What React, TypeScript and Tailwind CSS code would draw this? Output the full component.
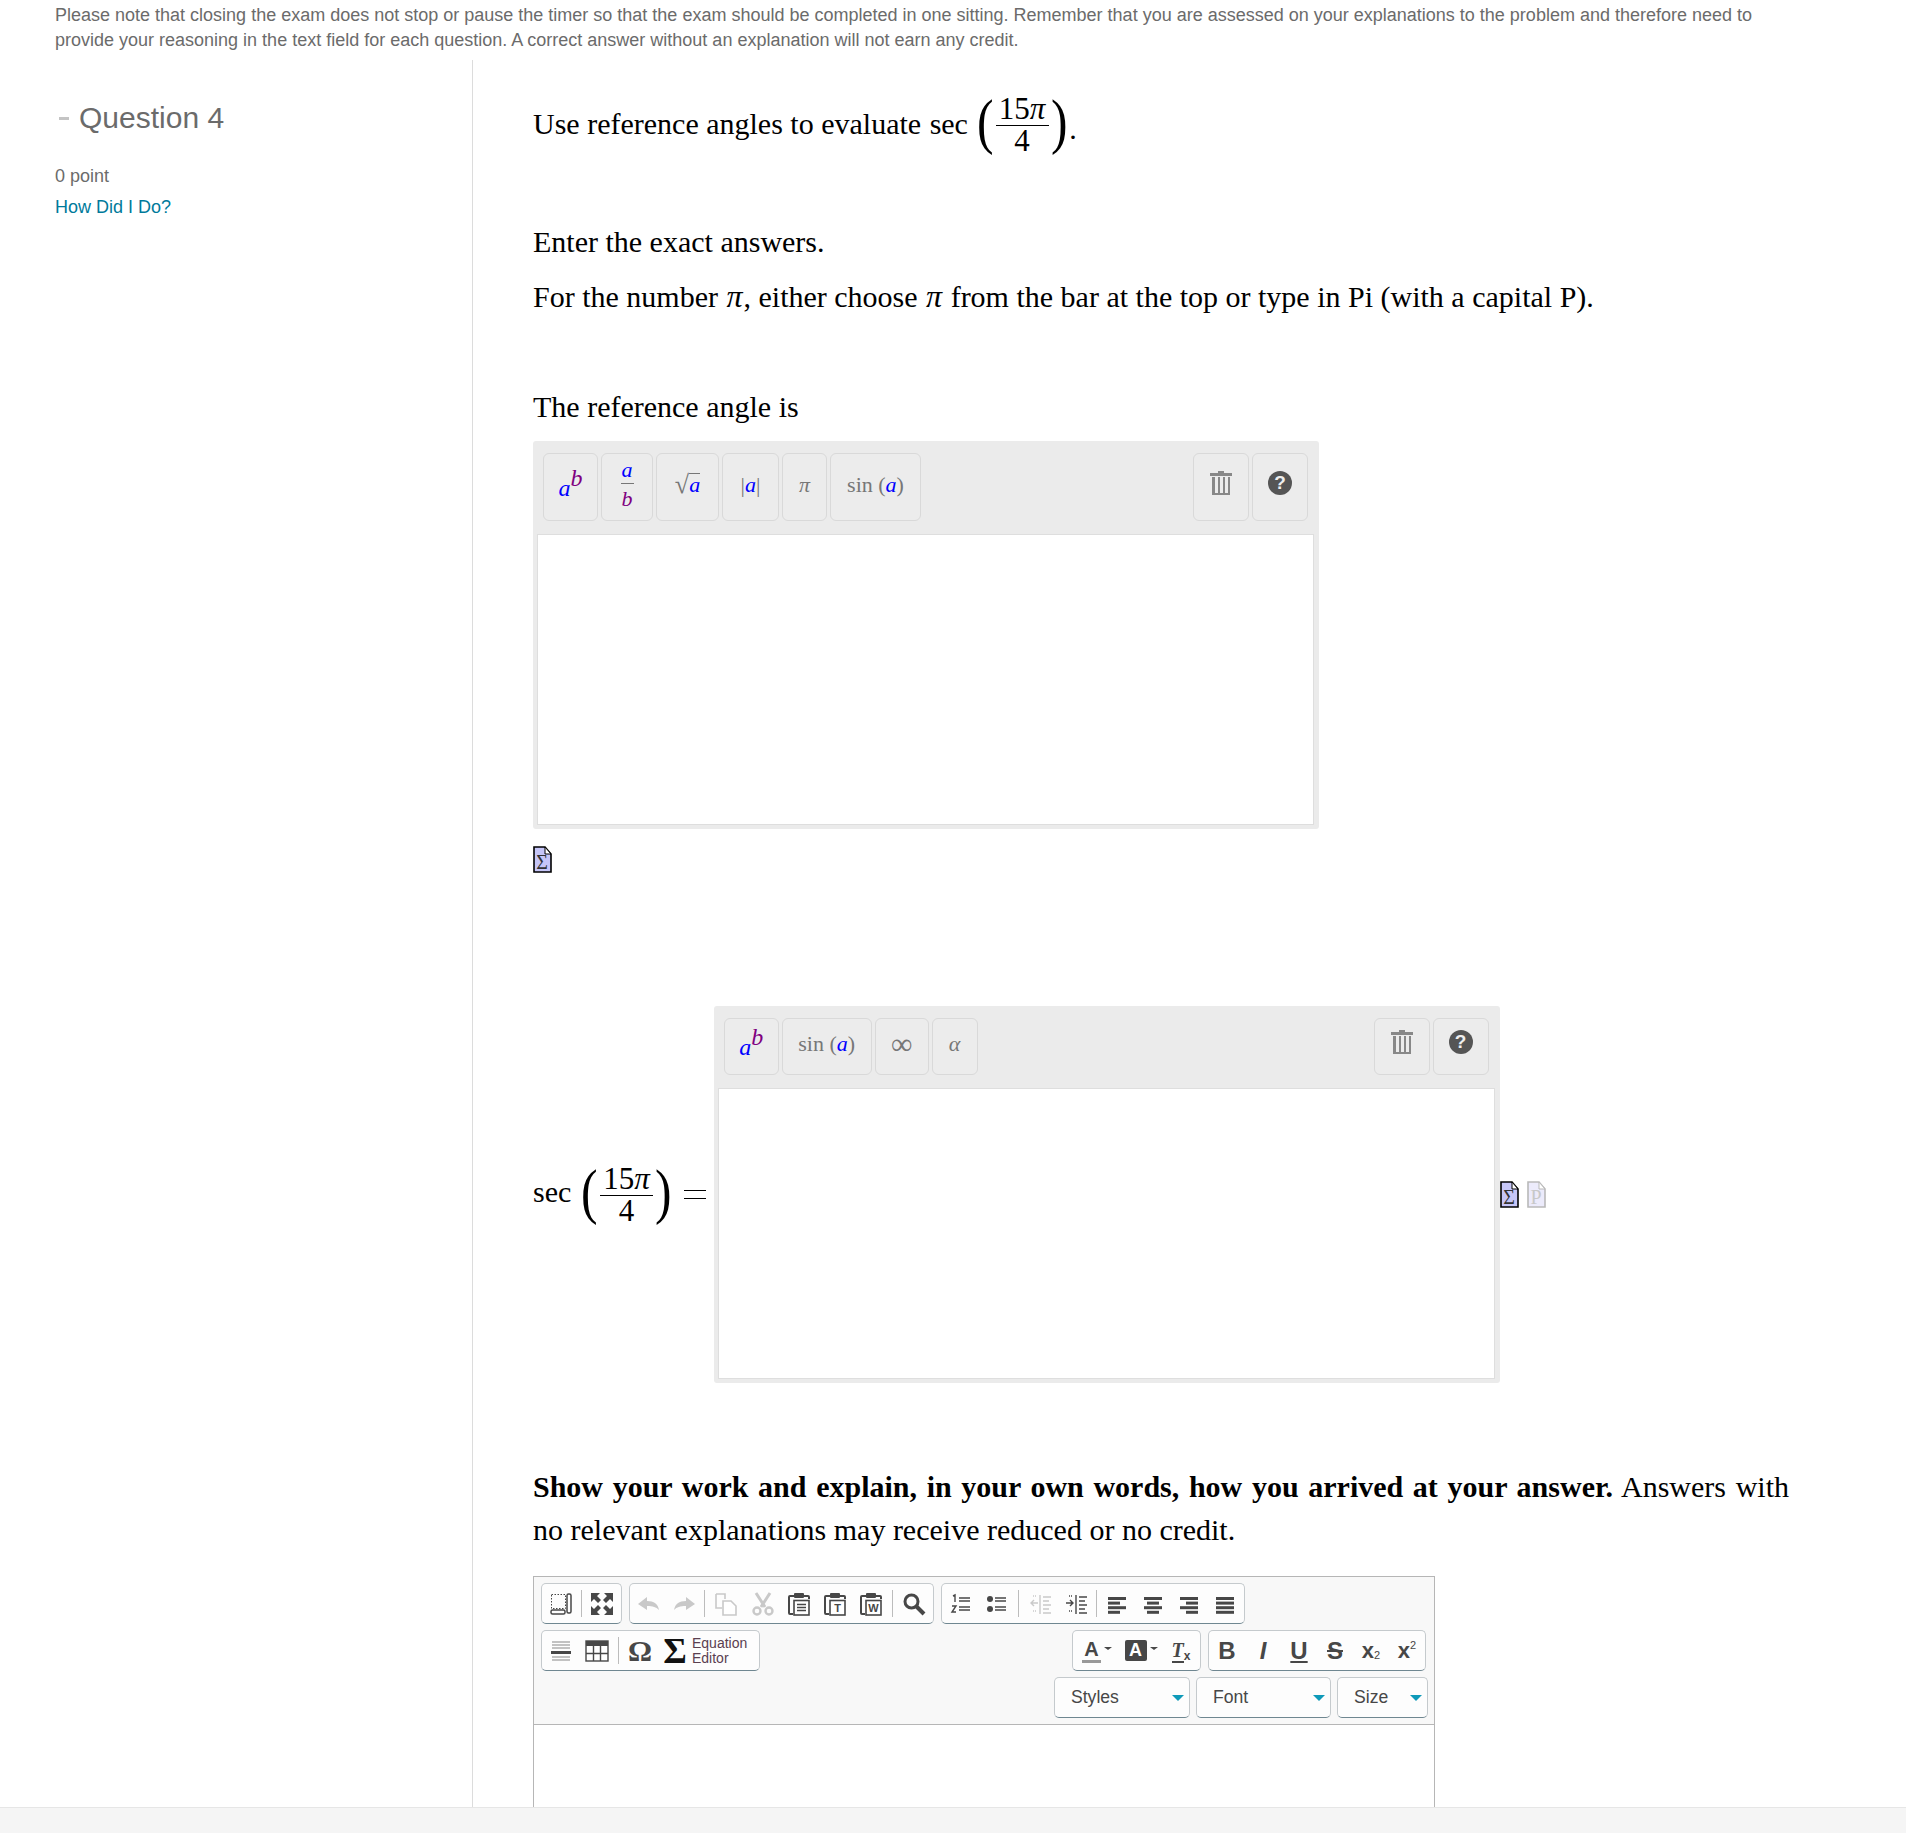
import type { ReactNode } from "react";

const A = () => <i className="text-[#0000ff]">a</i>;
const B = () => <i className="text-[#800080]">b</i>;

function Frac() {
  return (
    <span className="inline-flex flex-col items-center w-[53px] leading-[32px] text-[31px]">
      <span className="border-b-[1.5px] border-black w-full text-center h-[33px] whitespace-nowrap">
        15<i>π</i>
      </span>
      <span className="h-[29px] leading-[30px]">4</span>
    </span>
  );
}

function Paren({ children }: { children: ReactNode }) {
  return <span className="text-[62px] leading-[62px] font-light -mt-[6px] scale-x-[0.8]">{children}</span>;
}

function Pi() {
  return <i className="text-[32px] leading-[0] mx-[1px]">π</i>;
}

function MathBtn({ w, h, children }: { w: string; h: string; children: ReactNode }) {
  return (
    <div className={`${w} ${h} flex items-center justify-center pb-[5px] rounded-[6px] border border-[#d9d9d9] bg-[#ececec] text-[#777] text-[22px] font-['Liberation_Serif',serif]`}>
      {children}
    </div>
  );
}

function TrashIcon() {
  return (
    <svg width="22" height="25" viewBox="0 0 22 25" className="-mt-[2px]">
      <rect x="8" y="0" width="6" height="2" fill="#888" />
      <rect x="0" y="2" width="22" height="3" fill="#888" />
      <path d="M2 6h18v18H2z" fill="#888" />
      <rect x="5" y="6" width="3" height="16" fill="#ececec" />
      <rect x="10" y="6" width="3" height="16" fill="#ececec" />
      <rect x="15" y="6" width="3" height="16" fill="#ececec" />
    </svg>
  );
}

function HelpIcon() {
  return (
    <div className="w-[24px] h-[24px] -mt-[3px] rounded-full bg-[#555] text-[#eee] text-[19px] leading-[24px] font-bold text-center font-['Liberation_Sans',sans-serif]">
      ?
    </div>
  );
}

function DocIcon({ muted, glyph }: { muted?: boolean; glyph: string }) {
  const stroke = muted ? "#b9b9b9" : "#000";
  return (
    <svg width="19" height="27" viewBox="0 0 19 27">
      <path d="M1 1h11l6 7v18H1z" fill={muted ? "#ecebfb" : "#c6c6f8"} stroke={stroke} strokeWidth="1.6" />
      <path d="M12 1v7h6z" fill="#fff" stroke={stroke} strokeWidth="1" />
      <text x="9" y="23" textAnchor="middle" fontSize="20" fontFamily="Liberation Serif" fill={muted ? "#c8c8c8" : "#333"}>
        {glyph}
      </text>
    </svg>
  );
}

function MathPanel({ h, tools }: { h: string; tools: ReactNode }) {
  return (
    <div className="w-[786px] rounded-[3px] bg-[#ebebeb] pl-[4px] pr-[5px] pb-[4px]">
      <div className="flex justify-between pt-[12px] pl-[6px] pr-[6px] pb-[13px]">
        <div className="flex gap-[3px]">{tools}</div>
        <div className="flex gap-[3px]">
          <MathBtn w="w-[56px]" h={h}>
            <TrashIcon />
          </MathBtn>
          <MathBtn w="w-[56px]" h={h}>
            <HelpIcon />
          </MathBtn>
        </div>
      </div>
      <div className="h-[291px] bg-white border border-[#dedede]" />
    </div>
  );
}

function Sep({ mx = "mx-[3px]" }: { mx?: string }) {
  return <div className={`w-px h-[27px] bg-[#bcbcbc] ${mx}`} />;
}

function Group({ children, px = "px-px" }: { children: ReactNode; px?: string }) {
  return (
    <div className={`h-[41px] flex items-center rounded-[5px] border border-[#c5cacd] border-b-[#6f8791] bg-[#fdfdfd] text-[#474747] ${px}`}>
      {children}
    </div>
  );
}

function Btn({ children, cls = "w-[36px]" }: { children?: ReactNode; cls?: string }) {
  return <div className={`h-full flex items-center justify-center ${cls}`}>{children}</div>;
}

function Ico({ children, w = 24, h = 24 }: { children: ReactNode; w?: number; h?: number }) {
  return (
    <svg width={w} height={h} viewBox={`0 0 ${w} ${h}`} fill="none">
      {children}
    </svg>
  );
}

const ink = "#474747";
const faint = "#c9c9c9";

function Lines({ kind, color = ink }: { kind: "l" | "c" | "r" | "j"; color?: string }) {
  const row = [0, 1, 2, 3].map((i) => {
    const short = i % 2 === 1 && kind !== "j";
    const w = short ? 12 : 18;
    const x = kind === "l" || !short ? 3 : kind === "c" ? 6 : 9;
    return <rect key={i} x={x} y={5 + i * 4.6} width={w} height="3" fill={color} />;
  });
  return <Ico>{row}</Ico>;
}

function Clip({ letter, color = ink }: { letter?: string; color?: string }) {
  return (
    <Ico>
      <path d="M7 4H3q-1 0-1 1v16q0 1 1 1h3M17 4h4q1 0 1 1v2" stroke={color} strokeWidth="2" />
      <rect x="7" y="1" width="10" height="5" rx="1" fill={color} />
      <rect x="7" y="8.5" width="15" height="14.5" fill="#fff" stroke={color} strokeWidth="1.6" />
      {letter ? (
        <text x="14.5" y="20" textAnchor="middle" fontSize="11" fontWeight="700" fontFamily="Liberation Sans" fill={color}>
          {letter}
        </text>
      ) : (
        <path d="M10 12.5h9M10 15.5h9M10 18.5h9" stroke={color} strokeWidth="1.5" />
      )}
    </Ico>
  );
}

function Indent({ color, flip }: { color: string; flip?: boolean }) {
  return (
    <Ico>
      <path d="M12 3v19" stroke={color} strokeWidth="1.4" />
      <path d="M15 5h8M15 9h6M15 13h8M15 17h6M15 21h8" stroke={color} strokeWidth="1.4" />
      <path d="M5 4h4M5 19h4" stroke={color} strokeWidth="1.4" strokeDasharray="1 1" />
      {flip ? <path d="M10 11H3M6 8l-3 3 3 3" stroke={color} strokeWidth="1.4" /> : <path d="M2 11h7M6 8l3 3-3 3" stroke={color} strokeWidth="1.4" />}
    </Ico>
  );
}

const Caret = () => <div className="w-0 h-0 border-x-[4px] border-x-transparent border-t-[3px] border-t-[#474747] ml-[3px] -mt-[5px]" />;

function Select({ w, label }: { w: string; label: string }) {
  return (
    <div className={`${w} h-[41px] flex items-center justify-between pl-[16px] pr-[5px] rounded-[5px] border border-[#c5cacd] border-b-[#6f8791] bg-[#fdfdfd] text-[17.6px] text-[#474747]`}>
      <span>{label}</span>
      <div className="w-0 h-0 border-x-[6px] border-x-transparent border-t-[6px] border-t-[#0e9ab9]" />
    </div>
  );
}

function RichEditor() {
  return (
    <div className="w-[902px] h-[400px] border border-[#b6b6b6] font-['Liberation_Sans',sans-serif]">
      <div className="bg-[#f8f8f8] border-b border-[#b6b6b6] px-[7px] pt-[6px] pb-[6px] flex flex-col gap-[6px]">
        <div className="flex gap-[7px]">
          <Group>
            <Btn>
              <Ico>
                <rect x="2.5" y="2.5" width="14" height="14" stroke={ink} strokeDasharray="1.5 1.5" />
                <rect x="18" y="2" width="4" height="19" rx="1.5" stroke={ink} strokeWidth="1.5" />
                <rect x="2" y="18" width="14" height="4" rx="1.5" stroke={ink} strokeWidth="1.5" />
              </Ico>
            </Btn>
            <Sep mx="mx-[2px]" />
            <Btn>
              <Ico>
                <path d="M1 1h9L7 4l4 4-3 3-4-4-3 3zM23 1h-9l3 3-4 4 3 3 4-4 3 3zM1 23h9l-3-3 4-4-3-3-4 4-3-3zM23 23h-9l3-3-4-4 3-3 4 4 3-3z" fill={ink} />
              </Ico>
            </Btn>
          </Group>
          <Group>
            <Btn cls="w-[36px]">
              <Ico>
                <path d="M1 12l9-7v4c7 0 11 3 12 9-3-3-6-4-12-4v4z" fill={faint} />
              </Ico>
            </Btn>
            <Btn cls="w-[34px]">
              <Ico>
                <path d="M23 12l-9-7v4C7 9 3 12 2 18c3-3 6-4 12-4v4z" fill={faint} />
              </Ico>
            </Btn>
            <Sep />
            <Btn>
              <Ico>
                <path d="M2 2h9l0 5M2 2v14h6" stroke={faint} strokeWidth="1.6" />
                <path d="M9 9h8l5 5v9H9z" fill="#fff" stroke={faint} strokeWidth="1.6" />
              </Ico>
            </Btn>
            <Btn cls="w-[36px] ml-[1px]">
              <Ico>
                <path d="M5 1l9 14M19 1l-9 14" stroke={faint} strokeWidth="3" />
                <circle cx="6" cy="19" r="3.5" stroke={faint} strokeWidth="2.4" />
                <circle cx="18" cy="19" r="3.5" stroke={faint} strokeWidth="2.4" />
              </Ico>
            </Btn>
            <Btn>
              <Clip />
            </Btn>
            <Btn>
              <Clip letter="T" />
            </Btn>
            <Btn>
              <Clip letter="W" />
            </Btn>
            <Sep />
            <Btn>
              <Ico>
                <circle cx="9.5" cy="9.5" r="6.5" stroke={ink} strokeWidth="3" />
                <path d="M14 14l8 8" stroke={ink} strokeWidth="4" />
              </Ico>
            </Btn>
          </Group>
          <Group>
            <Btn>
              <Ico>
                <path d="M4 4l2-1v7M3 14h4l-4 6h4M10 6h11M10 9h11M10 15h11M10 18h11" stroke={ink} strokeWidth="1.4" />
              </Ico>
            </Btn>
            <Btn>
              <Ico>
                <circle cx="5" cy="7" r="3" fill={ink} />
                <circle cx="5" cy="17" r="3" fill={ink} />
                <path d="M10 6h11M10 9h11M10 15h11M10 18h11" stroke={ink} strokeWidth="1.4" />
              </Ico>
            </Btn>
            <Sep />
            <Btn>
              <Indent color={faint} flip />
            </Btn>
            <Btn>
              <Indent color={ink} />
            </Btn>
            <Sep mx="mx-[2px]" />
            <Btn>
              <Lines kind="l" />
            </Btn>
            <Btn>
              <Lines kind="c" />
            </Btn>
            <Btn>
              <Lines kind="r" />
            </Btn>
            <Btn>
              <Lines kind="j" />
            </Btn>
          </Group>
        </div>
        <div className="flex justify-between pr-[1px]">
          <Group>
            <Btn>
              <Ico>
                <path d="M3 3h18M3 6h18M3 9h18M3 18h18M3 21h18" stroke="#888" strokeWidth="1.2" />
                <rect x="2" y="12" width="20" height="3" fill={ink} />
              </Ico>
            </Btn>
            <Btn>
              <Ico>
                <rect x="1" y="2" width="22" height="20" fill="#fff" stroke={ink} strokeWidth="1.4" />
                <rect x="1" y="2" width="22" height="5" fill={ink} />
                <path d="M8.5 7v15M15.5 7v15M1 14.5h22" stroke={ink} strokeWidth="1.4" />
              </Ico>
            </Btn>
            <Sep />
            <Btn>
              <span className="font-['Liberation_Serif',serif] text-[30px] leading-[30px] font-bold">Ω</span>
            </Btn>
            <Btn cls="w-[34px]">
              <span className="font-['Liberation_Serif',serif] text-[36px] leading-[36px] font-bold text-[#111]">Σ</span>
            </Btn>
            <div className="w-[66px] text-[14px] leading-[15px] text-[#5a4050]">
              Equation
              <br />
              Editor
            </div>
          </Group>
          <div className="flex gap-[7px]">
            <Group>
              <div className="w-[45px] h-full flex items-center justify-center pl-[1px]">
                <span className="font-bold text-[20px] leading-[22px] border-b-[3px] border-[#999] px-[2px]">A</span>
                <Caret />
              </div>
              <div className="w-[44px] h-full flex items-center justify-center">
                <span className="w-[22px] h-[21px] bg-[#474747] text-[#fff] rounded-[2px] font-bold text-[18px] leading-[21px] text-center">A</span>
                <Caret />
              </div>
              <div className="w-[36px] h-full flex items-center justify-center">
                <span className="italic font-['Liberation_Serif',serif] font-bold text-[20px] leading-[22px] border-b-[2px] border-[#474747]">T</span>
                <span className="font-bold text-[12px] mt-[10px]">x</span>
              </div>
            </Group>
            <Group px="px-0">
              <Btn cls="w-[36px] text-[24px] font-bold">B</Btn>
              <Btn cls="w-[36px] text-[24px] font-bold italic">I</Btn>
              <Btn cls="w-[36px] text-[24px] font-bold">
                <span className="underline underline-offset-2">U</span>
              </Btn>
              <Btn cls="w-[36px] text-[24px] font-bold">
                <span className="line-through">S</span>
              </Btn>
              <Btn cls="w-[36px] text-[22px] font-bold">
                x<span className="text-[11px] font-normal mt-[10px]">2</span>
              </Btn>
              <Btn cls="w-[36px] text-[22px] font-bold">
                x<span className="text-[11px] font-normal -mt-[10px]">2</span>
              </Btn>
            </Group>
          </div>
        </div>
        <div className="flex justify-end gap-[6px] -mr-[1px]">
          <Select w="w-[136px]" label="Styles" />
          <Select w="w-[135px]" label="Font" />
          <Select w="w-[91px]" label="Size" />
        </div>
      </div>
    </div>
  );
}

export default function App() {
  return (
    <div className="h-[1833px] flex flex-col bg-white overflow-hidden font-['Liberation_Sans',sans-serif]">
      <div className="h-[1807px] overflow-hidden">
        <p className="w-[1790px] pl-[55px] h-[60px] text-[18px] leading-[25px] text-[#6b6b6b] pt-[3px]">
          Please note that closing the exam does not stop or pause the timer so that the exam should be completed in one sitting. Remember that you are assessed on your explanations to the problem and therefore need to provide your reasoning in the text field for each question. A correct answer without an explanation will not earn any credit.
        </p>
        <div className="flex h-[1747px]">
          <aside className="w-[473px] shrink-0 border-r border-[#dcdcdc] pl-[55px] pt-[39px]">
            <div className="flex items-center h-[38px] text-[30px] leading-[38px] text-[#6b6b6b]">
              <span className="w-[10px] h-[3px] bg-[#c4c4c4] ml-[4px] mr-[10px]" />
              Question 4
            </div>
            <div className="mt-[23px] text-[18px] leading-[32px] text-[#6b6b6b]">0 point</div>
            <a className="block text-[18px] leading-[31px] text-[#007a9b]">How Did I Do?</a>
          </aside>
          <main className="flex-1 pl-[60px] text-[30px] text-black font-['Liberation_Serif',serif]">
            <div className="flex items-center h-[62px] mt-[33px]">
              <span className="mr-[7px] -mt-[2px] whitespace-pre">
                Use reference angles to evaluate <span className="ml-[1px]">sec</span>
              </span>
              <Paren>(</Paren>
              <Frac />
              <Paren>)</Paren>
              <span className="mt-[8px]">.</span>
            </div>
            <p className="mt-[69px] leading-[36px]">Enter the exact answers.</p>
            <p className="mt-[19px] leading-[36px]">
              For the number <Pi />, either choose <Pi /> from the bar at the top or type in Pi (with a capital P).
            </p>
            <p className="mt-[74px] leading-[36px] mb-[16px]">The reference angle is</p>
            <MathPanel
              h="h-[68px]"
              tools={
                <>
                  <MathBtn w="w-[55px]" h="h-[68px]">
                    <span className="text-[24px] mt-[6px]">
                      <A />
                      <span className="relative -top-[10px]">
                        <B />
                      </span>
                    </span>
                  </MathBtn>
                  <MathBtn w="w-[52px]" h="h-[68px]">
                    <span className="flex flex-col items-center text-[22px] leading-[26px]">
                      <span className="border-b border-[#777] px-[1px] h-[27px]">
                        <A />
                      </span>
                      <span className="mt-[2px]">
                        <B />
                      </span>
                    </span>
                  </MathBtn>
                  <MathBtn w="w-[63px]" h="h-[68px]">
                    <span className="text-[26px]">√</span>
                    <span className="border-t border-[#777] leading-[22px]">
                      <A />
                    </span>
                  </MathBtn>
                  <MathBtn w="w-[57px]" h="h-[68px]">
                    |<A />|
                  </MathBtn>
                  <MathBtn w="w-[45px]" h="h-[68px]">
                    <i>π</i>
                  </MathBtn>
                  <MathBtn w="w-[91px]" h="h-[68px]">
                    sin (<A />)
                  </MathBtn>
                </>
              }
            />
            <div className="mt-[17px] h-[27px]">
              <DocIcon glyph="Σ" />
            </div>
            <div className="mt-[133px] flex items-center h-[376px]">
              <span className="mr-[8px] -mt-[5px]">sec</span>
              <Paren>(</Paren>
              <Frac />
              <Paren>)</Paren>
              <span className="ml-[10px] w-[22px] mr-[8px] border-y-[1.5px] border-black h-[9px]" />
              <MathPanel
                h="h-[57px]"
                tools={
                  <>
                    <MathBtn w="w-[55px]" h="h-[57px]">
                      <span className="text-[24px] mt-[6px]">
                        <A />
                        <span className="relative -top-[10px]">
                          <B />
                        </span>
                      </span>
                    </MathBtn>
                    <MathBtn w="w-[90px]" h="h-[57px]">
                      sin (<A />)
                    </MathBtn>
                    <MathBtn w="w-[54px]" h="h-[57px]">
                      <span className="text-[30px]">∞</span>
                    </MathBtn>
                    <MathBtn w="w-[46px]" h="h-[57px]">
                      <i>α</i>
                    </MathBtn>
                  </>
                }
              />
              <div className="flex gap-[8px]">
                <DocIcon glyph="Σ" />
                <DocIcon muted glyph="P" />
              </div>
            </div>
            <p className="mt-[83px] w-[1256px] text-justify leading-[43px]">
              <b>Show your work and explain, in your own words, how you arrived at your answer.</b> Answers with no relevant explanations may receive reduced or no credit.
            </p>
            <div className="mt-[25px]">
              <RichEditor />
            </div>
          </main>
        </div>
      </div>
      <div className="h-[26px] bg-[#f5f5f5] border-t border-[#e6e6e6]" />
    </div>
  );
}
